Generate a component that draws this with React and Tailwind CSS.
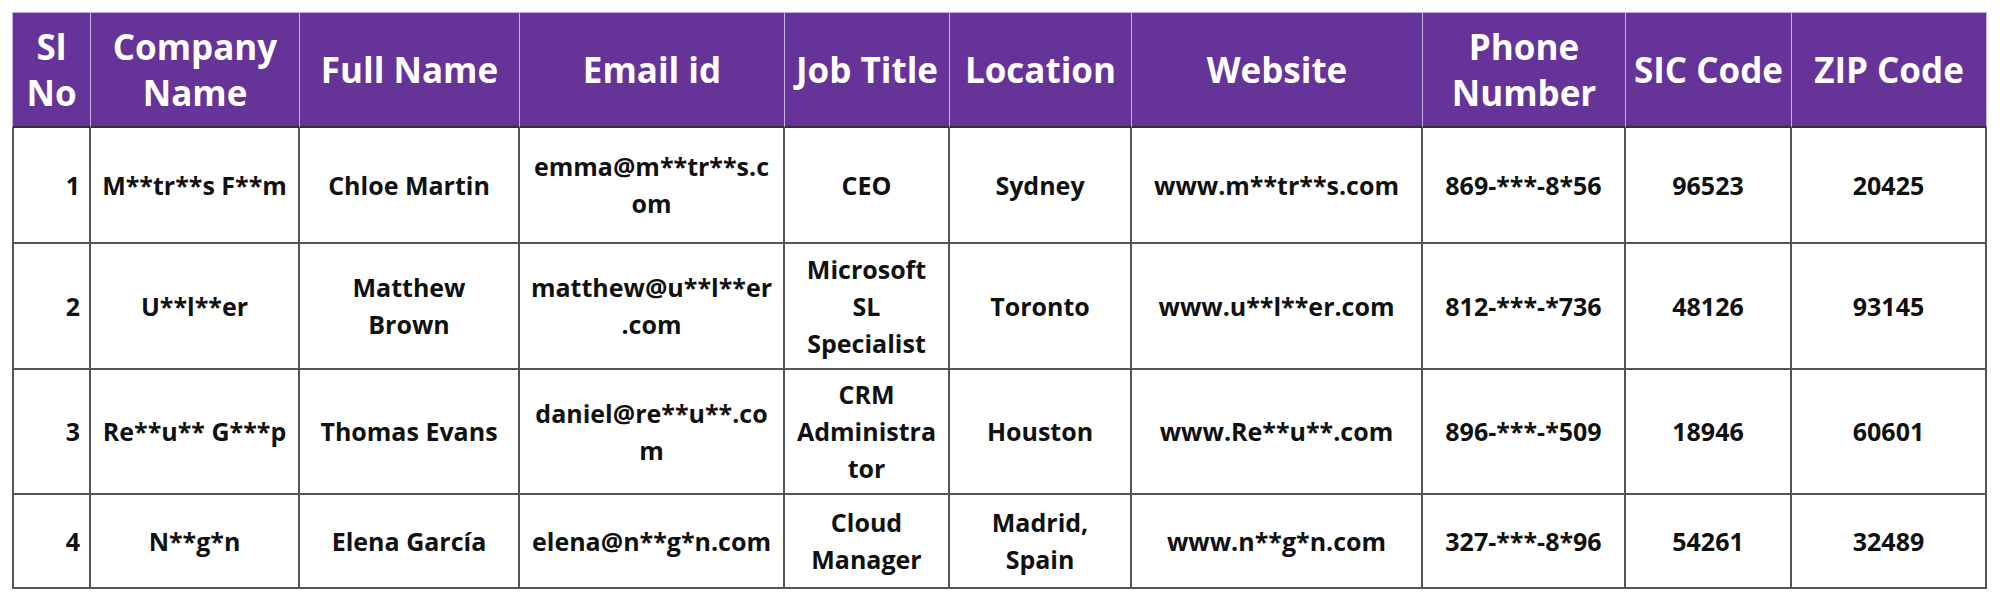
const columns = [
  { label: ['Sl', 'No'], w: 'w-[79px]' },
  { label: ['Company', 'Name'], w: 'w-[209px]' },
  { label: ['Full Name'], w: 'w-[220px]' },
  { label: ['Email id'], w: 'w-[265px]' },
  { label: ['Job Title'], w: 'w-[165px]' },
  { label: ['Location'], w: 'w-[182px]' },
  { label: ['Website'], w: 'w-[291px]' },
  { label: ['Phone', 'Number'], w: 'w-[203px]' },
  { label: ['SIC Code'], w: 'w-[166px]' },
  { label: ['ZIP Code'], w: 'w-[195px]' },
]

const rows = [
  {
    h: 'h-[116px]',
    cells: ['1', ['M**tr**s F**m'], ['Chloe Martin'], ['emma@m**tr**s.c', 'om'], ['CEO'], ['Sydney'], ['www.m**tr**s.com'], ['869-***-8*56'], ['96523'], ['20425']],
  },
  {
    h: 'h-[126px]',
    cells: ['2', ['U**l**er'], ['Matthew', 'Brown'], ['matthew@u**l**er', '.com'], ['Microsoft', 'SL', 'Specialist'], ['Toronto'], ['www.u**l**er.com'], ['812-***-*736'], ['48126'], ['93145']],
  },
  {
    h: 'h-[125px]',
    cells: ['3', ['Re**u** G***p'], ['Thomas Evans'], ['daniel@re**u**.co', 'm'], ['CRM', 'Administra', 'tor'], ['Houston'], ['www.Re**u**.com'], ['896-***-*509'], ['18946'], ['60601']],
  },
  {
    h: 'h-[94px]',
    cells: ['4', ['N**g*n'], ['Elena García'], ['elena@n**g*n.com'], ['Cloud', 'Manager'], ['Madrid,', 'Spain'], ['www.n**g*n.com'], ['327-***-8*96'], ['54261'], ['32489']],
  },
]

function Lines({ lines }) {
  return lines.map((l, i) => (
    <span key={i} className="block whitespace-nowrap">{l}</span>
  ))
}

export default function App() {
  return (
    <div className="bg-white w-[2000px] h-[600px] pt-[12px] pl-[12px] font-['Open_Sans',sans-serif]">
      <table className="table-fixed border-separate border-spacing-0 w-[1975px]">
        <thead>
          <tr>
            {columns.map((c, i) => (
              <th
                key={i}
                className={`${c.w} h-[116px] bg-[#663399] text-white font-bold text-[35px] leading-[46px] text-center align-middle px-0 border-t border-r border-[#c7b2de] border-b-2 border-b-[#333] ${i === 0 ? 'border-l' : ''}`}
              >
                <Lines lines={c.label} />
              </th>
            ))}
          </tr>
        </thead>
        <tbody>
          {rows.map((r, ri) => (
            <tr key={ri}>
              {r.cells.map((cell, ci) => (
                <td
                  key={ci}
                  className={`${r.h} text-[#111] font-bold text-[25px] leading-[37px] align-middle border-r-2 border-b-2 border-[#555] ${ci === 0 ? 'border-l-2 text-right pr-[9px]' : 'text-center px-1'}`}
                >
                  {ci === 0 ? cell : <Lines lines={cell} />}
                </td>
              ))}
            </tr>
          ))}
        </tbody>
      </table>
    </div>
  )
}
